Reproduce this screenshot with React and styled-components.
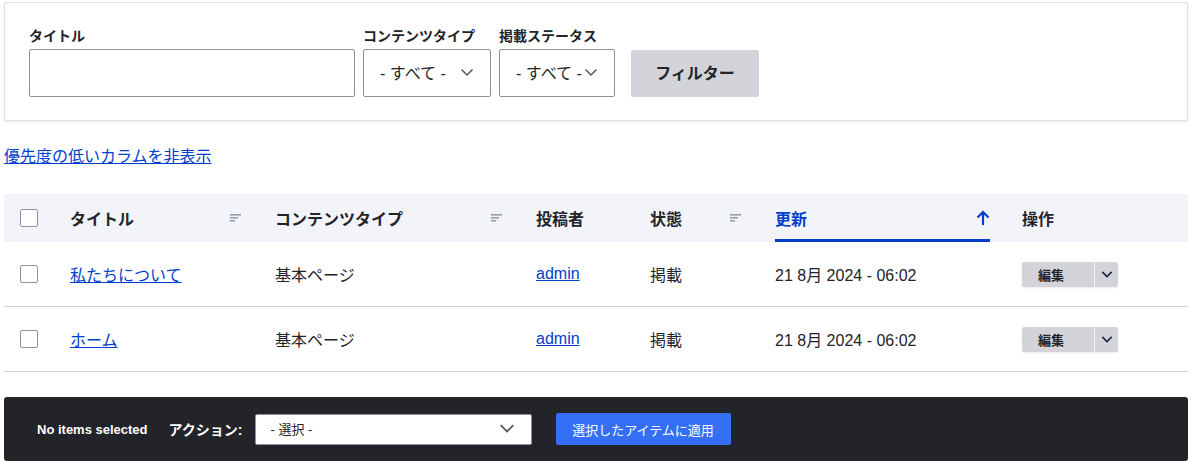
import React from 'react'
import styled, { createGlobalStyle } from 'styled-components'

const GlobalStyle = createGlobalStyle`
  body {
    margin: 0;
    background: #fff;
    font-family: "Liberation Sans", "Noto Sans CJK JP", sans-serif;
    color: #232429;
  }
`

const Page = styled.div`
  padding: 2px 4px 0;
  width: 1184px;
`

const FilterPanel = styled.form`
  display: flex;
  align-items: flex-end;
  gap: 8px;
  padding: 24px 24px 23px;
  border: 1px solid #dedfe4;
  border-radius: 2px;
  box-shadow: 0 1px 3px rgba(0, 0, 0, 0.08);
`

const Field = styled.div`
  display: flex;
  flex-direction: column;
`

const Label = styled.label`
  font-size: 14px;
  font-weight: 700;
  line-height: 18px;
  margin-bottom: 4px;
  white-space: nowrap;
`

const TextInput = styled.div`
  box-sizing: border-box;
  width: ${p => p.$w}px;
  height: 48px;
  border: 1px solid #8e929c;
  border-radius: 2px;
  background: #fff;
`

const Select = styled.div`
  box-sizing: border-box;
  display: flex;
  align-items: center;
  gap: 2px;
  width: ${p => p.$w}px;
  flex-shrink: 0;
  height: ${p => p.$h || 48}px;
  padding: 0 16px ${p => p.$pb || 2}px ${p => p.$pl || 16}px;
  border: 1px solid #8e929c;
  border-radius: 2px;
  background: #fff;
  font-size: ${p => p.$fs || 16}px;
  color: #232429;
  white-space: nowrap;
  svg { margin-left: auto; flex-shrink: 0; }
`

const FilterButton = styled.button`
  margin-left: 8px;
  width: 128px;
  height: 47px;
  padding: 0 0 3px;
  border: none;
  border-radius: 2px;
  background: #d3d4d9;
  font-family: inherit;
  font-size: 16px;
  font-weight: 700;
  color: #232429;
`

const ToggleLink = styled.a`
  display: inline-block;
  margin-top: 26px;
  font-size: 16px;
  line-height: 20px;
  color: #003ecc;
  text-decoration: underline;
`

const Table = styled.div`
  margin-top: 27px;
  display: grid;
  grid-template-columns: 50px 205px 261px 114px 125px 247px 1fr;
`

const HeadCell = styled.div`
  box-sizing: border-box;
  height: 48px;
  display: flex;
  align-items: center;
  justify-content: space-between;
  padding: 0 ${p => (p.$sort ? 18 : 16)}px 0 16px;
  background: #f3f4f9;
  font-size: 16px;
  font-weight: 700;
  color: ${p => (p.$active ? '#003ecc' : '#232429')};
`

const ActiveInner = styled.div`
  box-sizing: border-box;
  width: 100%;
  height: 100%;
  display: flex;
  align-items: center;
  justify-content: space-between;
  padding-top: 3px;
  border-bottom: 3px solid #003ecc;
`

const Cell = styled.div`
  box-sizing: border-box;
  height: 65px;
  display: flex;
  align-items: center;
  padding: 0 16px;
  border-bottom: 1px solid #d3d4d9;
  font-size: 16px;
  color: #232429;
`

const Check = styled.span`
  box-sizing: border-box;
  display: block;
  width: 18px;
  height: 18px;
  border: 1px solid #8e929c;
  border-radius: 2px;
  background: #fff;
`

const Link = styled.a`
  color: #003ecc;
  text-decoration: underline;
`

const EditGroup = styled.div`
  display: flex;
  height: 25px;
  border-radius: 2px;
  overflow: hidden;
  background: #d3d4d9;
  box-shadow: 0 1px 2px rgba(0, 0, 0, 0.08);
`

const EditButton = styled.button`
  width: 72px;
  padding: 0 0 0 16px;
  text-align: left;
  border: none;
  background: transparent;
  font-family: inherit;
  font-size: 13px;
  font-weight: 700;
  color: #232429;
`

const EditToggle = styled.button`
  width: 24px;
  border: none;
  border-left: 1px solid #f3f4f9;
  background: transparent;
  display: flex;
  align-items: center;
  justify-content: center;
  padding: 0;
`

const BulkBar = styled.div`
  margin-top: 25px;
  height: 64px;
  display: flex;
  align-items: center;
  padding-left: 33px;
  background: #232429;
  border-radius: 3px;
  color: #fff;
`

const BulkStatus = styled.span`
  font-size: 13px;
  font-weight: 700;
  margin-right: 21px;
`

const BulkLabel = styled.span`
  font-size: 14px;
  font-weight: 700;
  margin-right: 12px;
`

const ApplyButton = styled.button`
  margin-left: 24px;
  height: 32px;
  width: 175px;
  border: none;
  border-radius: 2px;
  background: #356ff5;
  color: #fff;
  font-family: inherit;
  font-size: 13px;
`

const Chevron = ({ size = 14, color = '#545560', stroke = 1.5 }) => (
  <svg width={size} height={size} viewBox="0 0 14 14" fill="none">
    <path d="M1.5 4.5 7 10l5.5-5.5" stroke={color} strokeWidth={stroke} />
  </svg>
)

const SortIcon = () => (
  <svg width="11" height="8" viewBox="0 0 11 8">
    <rect x="0" y="0" width="11" height="1.6" fill="#9a9eac" />
    <rect x="0" y="3" width="8" height="1.6" fill="#9a9eac" />
    <rect x="0" y="6" width="5" height="1.6" fill="#9a9eac" />
  </svg>
)

const ArrowUp = () => (
  <svg width="14" height="16" viewBox="0 0 14 16" fill="none">
    <path d="M7 15V2M1.5 7.5 7 2l5.5 5.5" stroke="#003ecc" strokeWidth="2.2" />
  </svg>
)

const rows = [
  { title: '私たちについて', type: '基本ページ', author: 'admin', status: '掲載', date: '21 8月 2024 - 06:02' },
  { title: 'ホーム', type: '基本ページ', author: 'admin', status: '掲載', date: '21 8月 2024 - 06:02' },
]

export default function App() {
  return (
    <Page>
      <GlobalStyle />
      <FilterPanel>
        <Field>
          <Label>タイトル</Label>
          <TextInput $w={326} />
        </Field>
        <Field>
          <Label>コンテンツタイプ</Label>
          <Select $w={128}>- すべて -<Chevron /></Select>
        </Field>
        <Field>
          <Label>掲載ステータス</Label>
          <Select $w={116}>- すべて -<Chevron /></Select>
        </Field>
        <FilterButton type="button">フィルター</FilterButton>
      </FilterPanel>

      <ToggleLink>優先度の低いカラムを非表示</ToggleLink>

      <Table>
        <HeadCell><Check /></HeadCell>
        <HeadCell $sort>タイトル<SortIcon /></HeadCell>
        <HeadCell $sort>コンテンツタイプ<SortIcon /></HeadCell>
        <HeadCell>投稿者</HeadCell>
        <HeadCell $sort>状態<SortIcon /></HeadCell>
        <HeadCell $active>
          <ActiveInner>更新<ArrowUp /></ActiveInner>
        </HeadCell>
        <HeadCell>操作</HeadCell>

        {rows.map(r => (
          <React.Fragment key={r.title}>
            <Cell><Check /></Cell>
            <Cell><Link>{r.title}</Link></Cell>
            <Cell>{r.type}</Cell>
            <Cell><Link>{r.author}</Link></Cell>
            <Cell>{r.status}</Cell>
            <Cell>{r.date}</Cell>
            <Cell>
              <EditGroup>
                <EditButton type="button">編集</EditButton>
                <EditToggle type="button"><Chevron size={12} color="#232a44" stroke={2} /></EditToggle>
              </EditGroup>
            </Cell>
          </React.Fragment>
        ))}
      </Table>

      <BulkBar>
        <BulkStatus>No items selected</BulkStatus>
        <BulkLabel>アクション:</BulkLabel>
        <Select $w={277} $h={31} $fs={13} $pl={15} $pb={0}>- 選択 -<Chevron size={16} /></Select>
        <ApplyButton type="button">選択したアイテムに適用</ApplyButton>
      </BulkBar>
    </Page>
  )
}
